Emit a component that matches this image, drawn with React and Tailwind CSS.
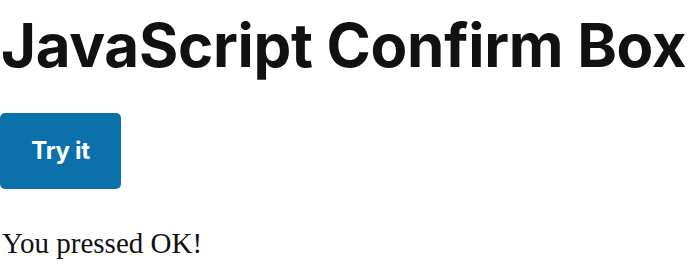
export default function App() {
  return (
    <div className="w-[700px] h-[280px] bg-white overflow-hidden">
      <h1 className="pt-[12px] pl-[1px] text-[60px] leading-[1.1] font-bold tracking-[-0.3px] text-[#111111] font-['Inter',sans-serif]">
        JavaScript Confirm Box
      </h1>
      <button
        type="button"
        className="mt-[35px] w-[121px] h-[76px] rounded-[5px] bg-[#0c71ab] text-white text-[24px] font-bold tracking-[-0.3px] font-['Inter',sans-serif]"
      >
        Try it
      </button>
      <p className="mt-[34px] pl-[2px] text-[29px] leading-[1.4] text-[#111111] font-['Liberation_Serif',serif]">
        You pressed OK!
      </p>
    </div>
  );
}
